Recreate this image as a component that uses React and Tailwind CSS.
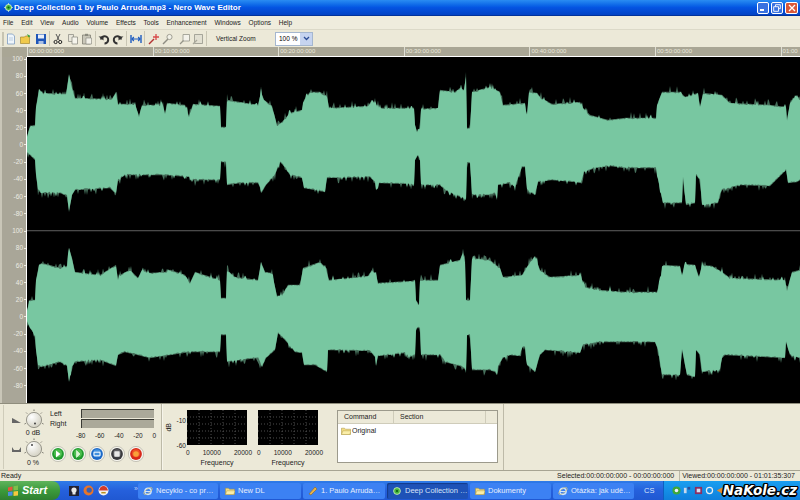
import React from 'react';

const rng = (seed) => () => {
  seed = (seed + 0x6d2b79f5) | 0;
  let t = Math.imul(seed ^ (seed >>> 15), 1 | seed);
  t = (t + Math.imul(t ^ (t >>> 7), 61 | t)) ^ t;
  return ((t ^ (t >>> 14)) >>> 0) / 4294967296;
};

const sampleEnv = (env, x) => {
  for (let i = 0; i < env.length - 1; i++) {
    const [x0, y0] = env[i];
    const [x1, y1] = env[i + 1];
    if (x >= x0 && x <= x1) return x1 === x0 ? y1 : y0 + ((y1 - y0) * (x - x0)) / (x1 - x0);
  }
  return env[env.length - 1][1];
};

const top1 = [[27,137],[30,126],[35,125],[36,107],[39,89],[42,93],[66,94],[69,74],[72,88],[75,98],[112,99],[116,92],[118,104],[135,104],[139,116],[142,105],[163,105],[165,114],[167,103],[185,105],[189,116],[193,104],[220,106],[221,127],[226,127],[227,100],[258,105],[261,92],[264,100],[272,106],[277,125],[282,122],[290,113],[302,110],[304,100],[310,92],[320,92],[327,96],[329,108],[368,106],[372,100],[376,105],[380,108],[414,108],[415,125],[417,132],[420,128],[421,109],[438,108],[440,90],[455,92],[460,88],[464,90],[466,76],[467,128],[470,128],[472,92],[490,87],[500,92],[503,105],[525,103],[527,118],[529,92],[537,93],[541,98],[552,104],[580,102],[583,108],[590,115],[608,120],[625,118],[656,118],[657,105],[662,92],[680,92],[685,97],[698,93],[700,107],[703,93],[722,95],[730,103],[770,105],[786,107],[787,120],[790,103],[797,95],[800,100]];
const bot1 = [[27,153],[30,155],[35,160],[36,175],[38,190],[41,193],[60,193],[67,196],[69,212],[72,195],[75,190],[110,188],[116,194],[118,180],[125,175],[165,175],[190,177],[192,182],[193,180],[220,180],[221,162],[226,162],[227,185],[240,183],[258,183],[262,192],[266,185],[275,175],[280,162],[283,165],[290,175],[302,178],[304,188],[315,190],[325,192],[327,178],[370,177],[375,182],[376,190],[378,188],[379,183],[410,184],[414,186],[415,160],[418,155],[420,160],[421,185],[440,185],[445,190],[458,196],[464,198],[466,200],[466,163],[470,163],[472,195],[490,195],[495,193],[497,200],[498,185],[510,183],[515,187],[522,167],[525,167],[527,190],[535,195],[538,182],[552,180],[575,182],[581,183],[584,172],[595,168],[610,166],[625,168],[656,168],[660,190],[663,203],[682,203],[683,178],[686,205],[695,203],[696,175],[700,180],[702,205],[718,203],[720,195],[722,190],[740,185],[770,186],[786,170],[788,183],[797,182],[800,180]];
const top2 = [[27,310],[30,300],[35,300],[36,280],[39,265],[42,263],[60,268],[67,266],[69,248],[72,258],[75,272],[100,275],[116,265],[118,280],[120,275],[130,270],[138,278],[142,270],[150,273],[165,272],[170,270],[185,275],[190,283],[195,272],[220,280],[221,298],[226,298],[227,270],[235,277],[258,280],[261,262],[265,272],[272,273],[277,296],[282,295],[288,285],[300,285],[303,268],[320,262],[326,268],[329,280],[350,278],[368,276],[372,270],[376,274],[378,283],[412,281],[415,280],[416,300],[419,305],[420,280],[438,280],[440,265],[460,260],[463,252],[465,262],[466,300],[470,300],[472,258],[490,260],[500,268],[503,277],[522,275],[530,262],[535,256],[540,270],[550,277],[580,275],[585,287],[600,290],[625,292],[657,292],[660,280],[663,265],[680,266],[682,275],[685,264],[695,265],[699,277],[702,265],[712,266],[722,272],[730,278],[785,280],[787,290],[792,272],[800,270]];
const bot2 = [[27,322],[30,328],[35,335],[36,350],[38,365],[41,367],[60,362],[67,366],[69,382],[72,367],[75,362],[100,360],[116,366],[118,355],[125,352],[150,358],[190,352],[220,352],[221,335],[226,335],[227,362],[240,360],[258,358],[262,367],[266,358],[275,350],[278,333],[285,340],[295,352],[302,353],[304,365],[315,365],[327,372],[328,350],[370,351],[375,357],[376,366],[378,356],[405,353],[410,357],[415,355],[416,328],[420,328],[421,355],[440,355],[445,362],[460,366],[466,370],[467,335],[470,335],[472,370],[490,370],[495,372],[497,375],[498,366],[503,358],[510,355],[520,356],[522,347],[525,347],[527,365],[535,372],[540,355],[545,350],[580,353],[583,345],[600,342],[655,342],[658,350],[662,375],[680,375],[682,350],[687,375],[695,377],[696,350],[700,355],[702,372],[720,370],[722,358],[725,355],[785,358],[786,342],[790,355],[800,358]];

// outward spikes are rare, the rest of the edge only wobbles a little
const edgeNoise = (r, fuzz) => {
  const a = r();
  const b = r();
  if (fuzz) return a < 0.14 ? 2 + b * 4 : 0.2;
  return a < 0.07 ? 1.5 + b * 2.5 : -b * 1.3;
};

const buildPoints = (top, bot, offset, seed, fuzz) => {
  const r = rng(seed);
  const upper = [];
  const lower = [];
  for (let x = 27; x <= 800; x += 1) {
    upper.push(`${x - 27},${(sampleEnv(top, x) - offset - edgeNoise(r, fuzz)).toFixed(1)}`);
    lower.unshift(`${x - 27},${(sampleEnv(bot, x) - offset + edgeNoise(r, fuzz)).toFixed(1)}`);
  }
  return [...upper, ...lower].join(' ');
};

const ch1 = { fuzz: buildPoints(top1, bot1, 57, 11, true), main: buildPoints(top1, bot1, 57, 23, false) };
const ch2 = { fuzz: buildPoints(top2, bot2, 230, 37, true), main: buildPoints(top2, bot2, 230, 41, false) };

const menus = ['File', 'Edit', 'View', 'Audio', 'Volume', 'Effects', 'Tools', 'Enhancement', 'Windows', 'Options', 'Help'];
const dbLabels = ['100', '80', '60', '40', '20', '0', '-20', '-40', '-60', '-80'];
const ruler = ['00:00:00:000', '00:10:00:000', '00:20:00:000', '00:30:00:000', '00:40:00:000', '00:50:00:000', '01:00'];

const Channel = ({ data, line }) => (
  <div className="flex h-[173px]">
    <div className="w-[26px] shrink-0 bg-[#a9a698] border-l-2 border-[#c9c6b8] text-[6.5px] text-[#ecebe2] relative">
      <div className={line ? 'mt-[-7.6px]' : 'mt-[-6.6px]'}>
        {dbLabels.map((l) => (
          <div key={l} className="h-[17.2px] flex items-center justify-end gap-[1px]">
            <span>{l}</span>
            <span className="w-[2px] h-px bg-[#ecebe2]" />
          </div>
        ))}
      </div>
    </div>
    <div className="w-px bg-white shrink-0" />
    <svg className="flex-1 h-[173px] bg-black block" viewBox="0 0 773 173" preserveAspectRatio="none">
      {line && <rect x="0" y="0" width="773" height="1.3" fill="#4a4a4a" />}
      <polygon points={data.fuzz} fill="#47705c" />
      <polygon points={data.main} fill="#78c7a1" />
    </svg>
  </div>
);

const Knob = ({ dotX, dotY }) => (
  <svg width="22" height="22" viewBox="0 0 22 22">
    <defs>
      <radialGradient id="knobFill" cx="0.35" cy="0.3" r="0.9">
        <stop offset="0" stopColor="#ffffff" />
        <stop offset="1" stopColor="#c9c6b4" />
      </radialGradient>
    </defs>
    <circle cx="11" cy="11" r="7.6" fill="url(#knobFill)" stroke="#77766c" strokeWidth="0.7" />
    <g stroke="#55544c" strokeWidth="0.8">
      <path d="M11 0.5v1.5M3.2 3.6l1 1M18.8 3.6l-1 1M1.5 15l1.3-.6M20.5 15l-1.3-.6" />
    </g>
    <circle cx={dotX} cy={dotY} r="0.9" fill="#333" />
  </svg>
);

const Transport = ({ outer, inner, children }) => (
  <svg width="16" height="16" viewBox="0 0 16 16">
    <circle cx="8" cy="8" r="7.6" fill="#f6f5ee" stroke="#a9a89c" strokeWidth="0.6" />
    <circle cx="8" cy="8" r="5.9" fill={outer} />
    <circle cx="8" cy="7.2" r="4" fill={inner} opacity="0.75" />
    {children}
  </svg>
);

const Graph = () => (
  <svg width="60" height="35" viewBox="0 0 60 35" className="block bg-black">
    <path d="M12 0v35M24 0v35M36 0v35M48 0v35M0 7h60M0 14h60M0 21h60M0 28h60" stroke="#6f6f6f" strokeWidth="0.7" strokeDasharray="1 2" />
  </svg>
);

const ToolIcon = ({ children, className = '' }) => (
  <svg width="12" height="12" viewBox="0 0 12 12" className={`shrink-0 ${className}`}>{children}</svg>
);

const Sep = () => <div className="w-px h-[15px] bg-[#c9c6b4] mx-[2px]" />;

const TaskBtn = ({ icon, label, active, width }) => (
  <div className={`${width} h-[16px] rounded-[2px] flex items-center gap-[3px] pl-[5px] text-[7.5px] whitespace-nowrap overflow-hidden ${active ? 'bg-[#1e52b7] text-[#d8e4f8] shadow-[inset_1px_1px_1px_#123a8a]' : 'bg-[#3c81f3] text-[#e6eefc]'}`}>
    {icon}
    <span>{label}</span>
  </div>
);

const IeIcon = () => (
  <svg width="10" height="10" viewBox="0 0 10 10">
    <circle cx="5" cy="5.3" r="3.2" fill="none" stroke="#cfe6ff" strokeWidth="1.3" />
    <path d="M2 5.5h6" stroke="#cfe6ff" strokeWidth="1" />
    <ellipse cx="5" cy="5" rx="5" ry="2" transform="rotate(-35 5 5)" fill="none" stroke="#f2d36a" strokeWidth="0.6" />
  </svg>
);

const FolderIcon = ({ size = 10 }) => (
  <svg width={size} height={size * 0.8} viewBox="0 0 10 8">
    <path d="M0.5 1.2h3l1 1h5v5.3h-9z" fill="#f3dc82" stroke="#a58f3c" strokeWidth="0.5" />
    <path d="M0.5 7.5l1.4-3.7h8.1l-1.2 3.7z" fill="#fbeea8" stroke="#a58f3c" strokeWidth="0.4" />
  </svg>
);

export default function App() {
  return (
    <div className="w-[800px] h-[500px] flex flex-col overflow-hidden relative bg-[#ece9d8] text-black [font-family:'Liberation_Sans',sans-serif]">
      {/* Title bar */}
      <div className="h-[16px] flex items-center pl-[4px] pr-[2px] bg-gradient-to-b from-[#2a8cf2] via-[#0554e2] to-[#0342c4] border-b border-[#02329a]">
        <svg width="9" height="9" viewBox="0 0 10 10" className="mr-[1px]">
          <circle cx="5" cy="5" r="3.4" fill="#46b53e" stroke="#d9f5c8" strokeWidth="1" />
          <circle cx="5" cy="5" r="1.2" fill="#0d5c12" />
          <path d="M5 0v2M5 8v2M0 5h2M8 5h2" stroke="#d9f5c8" strokeWidth="0.8" />
        </svg>
        <span className="text-[8px] tracking-[0.07px] font-bold text-white whitespace-nowrap">Deep Collection 1 by Paulo Arruda.mp3 - Nero Wave Editor</span>
        <div className="ml-auto flex gap-[2px]">
          <div className="w-[12px] h-[12px] rounded-[2px] bg-[#3a72e0] border border-white flex items-end pl-[2px] pb-[2px]">
            <div className="w-[4px] h-[2px] bg-white" />
          </div>
          <div className="w-[12px] h-[12px] rounded-[2px] bg-[#3a72e0] border border-white flex items-center justify-center">
            <svg width="8" height="8" viewBox="0 0 8 8"><path d="M2.5 2.5V.7h4.8v4H5.5M.7 2.7h4.8v4.6H.7z" fill="none" stroke="#fff" strokeWidth="0.9" /></svg>
          </div>
          <div className="w-[13px] h-[12px] rounded-[2px] bg-[#d9583a] border border-white flex items-center justify-center">
            <svg width="8" height="8" viewBox="0 0 8 8"><path d="M1 1l6 6M7 1L1 7" stroke="#fff" strokeWidth="1.3" /></svg>
          </div>
        </div>
      </div>

      {/* Menu bar */}
      <div className="h-[13px] flex items-center gap-[7.8px] pl-[3px] text-[6.5px] text-[#222] bg-[#efecdd]">
        {menus.map((m) => <span key={m}>{m}</span>)}
      </div>

      {/* Toolbar */}
      <div className="h-[18px] flex items-center pl-[2px] border-t border-[#dcd9c8] bg-[#ece9d8]">
        <div className="w-[2px] h-[14px] bg-[#c7c4b2] mr-[1px]" />
        <div className="flex items-center gap-[3px]">
          <ToolIcon><path d="M2.5 1h5l2 2v8h-7z" fill="#eef5fb" stroke="#7f9cc0" strokeWidth="0.8" /><path d="M4 5h4M4 7h4" stroke="#a8bdd6" strokeWidth="0.7" /></ToolIcon>
          <ToolIcon><path d="M0.5 4h4l1-1h4v7.5h-9z" fill="#f0c94a" stroke="#987b1d" strokeWidth="0.6" /><path d="M7 1l3.5 2-2 1.5z" fill="#3aa63a" /></ToolIcon>
          <ToolIcon><path d="M1 1h10v10H1z" fill="#1f56b8" /><path d="M3 1.5h6v4H3z" fill="#e8eef8" /><path d="M3.5 8h5v3h-5z" fill="#a9c0e6" /></ToolIcon>
        </div>
        <Sep />
        <div className="flex items-center gap-[2.5px]">
          <ToolIcon><path d="M4 1l3 6M8 1L5 7" stroke="#555" strokeWidth="1" /><circle cx="3.6" cy="9" r="1.6" fill="none" stroke="#222" strokeWidth="1" /><circle cx="8.2" cy="9" r="1.6" fill="none" stroke="#222" strokeWidth="1" /></ToolIcon>
          <ToolIcon><path d="M1.5 1.5h5v7h-5z" fill="#e8e6da" stroke="#85857c" strokeWidth="0.7" /><path d="M5 4h5.5v7H5z" fill="#f5f4ec" stroke="#85857c" strokeWidth="0.7" /></ToolIcon>
          <ToolIcon><path d="M1.5 2h8v9h-8z" fill="#c9c7b9" stroke="#77766a" strokeWidth="0.7" /><path d="M4 .8h3v2.2H4z" fill="#8b8a7e" /><path d="M5 5h5.5v6H5z" fill="#f2f1e9" stroke="#85857c" strokeWidth="0.6" /></ToolIcon>
        </div>
        <Sep />
        <div className="flex items-center gap-[2px]">
          <ToolIcon><path d="M3 6.5A3.6 3.6 0 1 1 6.5 10.5" fill="none" stroke="#333" strokeWidth="2" /><path d="M0.5 3.5h5v4z" fill="#333" /></ToolIcon>
          <ToolIcon><path d="M9 6.5A3.6 3.6 0 1 0 5.5 10.5" fill="none" stroke="#333" strokeWidth="2" /><path d="M11.5 3.5h-5v4z" fill="#333" /></ToolIcon>
        </div>
        <Sep />
        <ToolIcon className="ml-[1px]"><path d="M1 2v8M11 2v8" stroke="#1f5cc0" strokeWidth="1.4" /><path d="M2 6h8M3.8 4L2 6l1.8 2M8.2 4L10 6 8.2 8" fill="none" stroke="#1f5cc0" strokeWidth="1.2" /></ToolIcon>
        <Sep />
        <div className="flex items-center gap-[2px] ml-[1px]">
          <ToolIcon><path d="M1 11l5-5" stroke="#b33434" strokeWidth="1.5" /><path d="M8 1v6M5 4h6" stroke="#d84a4a" strokeWidth="1.3" /></ToolIcon>
          <ToolIcon><path d="M1 11l5-5" stroke="#8e8d82" strokeWidth="1.5" /><circle cx="7.5" cy="4" r="2.6" fill="#f2f1e7" stroke="#8e8d82" strokeWidth="0.8" /></ToolIcon>
          <ToolIcon className="ml-[3px]"><path d="M4 1.5h6.5v6.5H4z" fill="#f3f2ea" stroke="#96958a" strokeWidth="0.8" /><path d="M1 11l3.5-3.5" stroke="#96958a" strokeWidth="1.2" /></ToolIcon>
          <ToolIcon className="-ml-[1px]"><path d="M2.5 1.5h8v9h-8z" fill="#e2e0d2" stroke="#96958a" strokeWidth="0.8" /><path d="M1 11l4-4" stroke="#a9a89c" strokeWidth="1.2" /></ToolIcon>
        </div>
        <Sep />
        <span className="text-[6.5px] text-[#222] ml-[7px] w-[59px]">Vertical Zoom</span>
        <div className="w-[38px] h-[14px] bg-white border border-[#a5b7cf] flex items-center justify-between pl-[3px] text-[6.5px]">
          <span>100 %</span>
          <div className="w-[12px] h-full bg-[#c6d4f0] flex items-center justify-center">
            <svg width="7" height="5" viewBox="0 0 7 5"><path d="M1 1l2.5 2.5L6 1" fill="none" stroke="#2c4d96" strokeWidth="1.3" /></svg>
          </div>
        </div>
      </div>

      {/* Ruler */}
      <div className="h-[10px] flex bg-[#a9a695] text-[6px] text-[#e9e8dc]">
        <div className="w-[27px] shrink-0 border-l-2 border-[#c9c6b8]" />
        {ruler.map((t) => (
          <div key={t} className="w-[125.6px] shrink-0 border-l border-[#dfded2] pl-[1px] leading-[8px] whitespace-nowrap overflow-hidden">{t}</div>
        ))}
      </div>
      <div className="h-px bg-white ml-[27px] -mt-px relative" />

      {/* Waveform */}
      <Channel data={ch1} />
      <Channel data={ch2} line />

      {/* Bottom panel */}
      <div className="h-[67px] flex items-stretch text-[7px] text-[#222] border-t border-[#8f8d7d]">
        <div className="w-[158px] ml-[3px] my-[1px] border-l border-[#cfccba] flex">
          <div className="w-[37px] flex flex-col items-center pl-[10px] pt-[4px]">
            <div className="flex items-center">
              <svg width="11" height="7" viewBox="0 0 11 7" className="mr-[1px]"><path d="M1 1v5h9L3 2z" fill="#666" /></svg>
              <Knob dotX={12} dotY={14.5} />
            </div>
            <span className="leading-[7px] ml-[11px] -mt-[2px] whitespace-nowrap">0 dB</span>
            <div className="flex items-center mt-[2px]">
              <svg width="11" height="7" viewBox="0 0 11 7" className="mr-[1px]"><path d="M1 1v5h9V1L8 4H3z" fill="#666" /></svg>
              <Knob dotX={9} dotY={7} />
            </div>
            <span className="leading-[7px] ml-[11px] -mt-[1px] whitespace-nowrap">0 %</span>
          </div>
          <div className="flex-1 pl-[9px] pt-[4px]">
            <div className="flex">
              <div className="w-[31px] flex flex-col text-[7px] leading-[10px]">
                <span>Left</span>
                <span>Right</span>
              </div>
              <div className="w-[73px] flex flex-col gap-[1.5px]">
                <div className="h-[8.5px] bg-[#aba99a] border-t border-l border-[#3a3a34]" />
                <div className="h-[8.5px] bg-[#aba99a] border-t border-l border-[#3a3a34]" />
              </div>
            </div>
            <div className="w-[80px] ml-[26px] flex justify-between text-[6.5px] leading-[8px] mt-[3px]">
              <span>-80</span><span>-60</span><span>-40</span><span>-20</span><span>0</span>
            </div>
            <div className="flex gap-[3.5px] mt-[6px]">
              <Transport outer="#1f9a2e" inner="#5cc95a"><path d="M6 4.5l4.5 3.5L6 11.5z" fill="#fff" /></Transport>
              <Transport outer="#1f9a2e" inner="#5cc95a"><path d="M6.5 4.5l3.5 3.5-3.5 3.5z" fill="#d9f5d0" stroke="#fff" strokeWidth="0.5" /></Transport>
              <Transport outer="#1c69c8" inner="#4e9fe8"><path d="M5 6.2h6v3.6H5z" fill="none" stroke="#fff" strokeWidth="1" /></Transport>
              <Transport outer="#3a3a3e" inner="#6d6d72"><rect x="5.3" y="5.3" width="5.4" height="5.4" rx="0.6" fill="#e8e8e8" /></Transport>
              <Transport outer="#d8281a" inner="#f4602e"><circle cx="8" cy="8" r="2.8" fill="#f9a13a" /></Transport>
            </div>
          </div>
        </div>
        <div className="w-[2px] border-l border-[#bdbaa8] bg-[#f6f4ea]" />
        <div className="w-[174px] flex pt-[6px] pl-[2px]">
          <div className="w-[9px] h-[35px] flex items-center justify-center">
            <span className="-rotate-90 text-[7px]">dB</span>
          </div>
          <div className="w-[13px] h-[35px] flex flex-col items-end pr-[1px] text-[6.5px] pt-[7px] gap-[17px] leading-[8px]">
            <span>-10</span>
            <span>-60</span>
          </div>
          <div className="flex gap-[11px]">
            {[0, 1].map((i) => (
              <div key={i} className="w-[60px] flex flex-col">
                <Graph />
                <div className="flex justify-between text-[6.5px] leading-[8px] mt-[4px] -ml-[1px] -mr-[5px]">
                  <span>0</span><span>10000</span><span>20000</span>
                </div>
                <div className="text-center text-[7px] leading-[9px] mt-[1px]">Frequency</div>
              </div>
            ))}
          </div>
        </div>
        <div className="w-[161px] h-[53px] mt-[6px] bg-white border border-[#9c9a8c] flex flex-col">
          <div className="h-[13px] flex bg-[#ece9d8] border-b border-[#cfccba] leading-[12px]">
            <div className="w-[56px] pl-[6px] border-r border-[#cfccba]">Command</div>
            <div className="w-[92px] pl-[6px] border-r border-[#cfccba]">Section</div>
          </div>
          <div className="flex items-center gap-[1px] pl-[3px] pt-[2px]">
            <FolderIcon />
            <span>Original</span>
          </div>
        </div>
        <div className="w-[1px] ml-[5px] border-l border-[#bdbaa8]" />
      </div>

      {/* Status bar */}
      <div className="h-[11px] flex items-center text-[7px] text-[#222] border-t border-[#a7a493] bg-[#ece9d8] leading-[10px]">
        <span className="pl-[1px]">Ready</span>
        <span className="ml-auto whitespace-nowrap">Selected:00:00:00:000 - 00:00:00:000</span>
        <span className="ml-[5px] mr-[5px] pl-[2px] border-l border-[#bdbaa8] whitespace-nowrap">Viewed:00:00:00:000 - 01:01:35:307</span>
      </div>

      {/* Taskbar */}
      <div className="h-[19px] flex items-center bg-gradient-to-b from-[#2f7be8] via-[#2560dc] to-[#2058d2]">
        <div className="w-[60px] h-full rounded-r-[8px] bg-gradient-to-b from-[#5fb45c] via-[#3b9a3b] to-[#2f7f30] flex items-center pl-[7px] gap-[3px]">
          <svg width="12" height="12" viewBox="0 0 12 12">
            <path d="M1 2.5l4.5-1v4L1 6z" fill="#e8553a" />
            <path d="M6.5 1.3l4.5-.8v4.5l-4.5.5z" fill="#7cc04a" />
            <path d="M1 7l4.5-.5v4L1 11z" fill="#4a8fe0" />
            <path d="M6.5 6.4l4.5-.4v4.5l-4.5.6z" fill="#f3c93e" />
          </svg>
          <span className="text-[11px] italic font-bold text-white">Start</span>
        </div>
        <div className="flex items-center gap-[4px] ml-[9px] w-[69px]">
          <svg width="10" height="10" viewBox="0 0 10 10"><rect width="10" height="10" fill="#223" /><circle cx="5" cy="4" r="2.6" fill="#e8e8e8" /><rect x="3.5" y="6" width="3" height="2.5" fill="#e8e8e8" /></svg>
          <svg width="11" height="11" viewBox="0 0 10 10"><circle cx="5" cy="5" r="4.5" fill="#e8742a" /><circle cx="5.6" cy="4.6" r="2.4" fill="#3a5fb0" /></svg>
          <svg width="11" height="11" viewBox="0 0 10 10"><circle cx="5" cy="5" r="4.5" fill="#f2f2f2" /><path d="M1 5a4 4 0 0 1 8 0z" fill="#d23a2a" /><path d="M3 7h4" stroke="#b8901e" strokeWidth="1.4" /></svg>
          <span className="ml-auto text-[7px] text-[#bcd4f8] leading-[7px] mb-[4px]">»</span>
        </div>
        <div className="flex gap-[2px]">
          <TaskBtn width="w-[80px]" icon={<IeIcon />} label="Necyklo - co pr…" />
          <TaskBtn width="w-[81px]" icon={<FolderIcon />} label="New DL" />
          <TaskBtn width="w-[82px]" icon={<svg width="10" height="10" viewBox="0 0 10 10"><path d="M1 8l6-7 2 2-6 6z" fill="#e5b24a" stroke="#7d5a1a" strokeWidth="0.5" /></svg>} label="1. Paulo Arruda…" />
          <TaskBtn width="w-[81px]" active icon={<svg width="10" height="10" viewBox="0 0 10 10"><circle cx="5" cy="5" r="3.4" fill="#46b53e" stroke="#d9f5c8" strokeWidth="0.8" /><circle cx="5" cy="5" r="1.1" fill="#0d5c12" /></svg>} label="Deep Collection …" />
          <TaskBtn width="w-[81px]" icon={<FolderIcon />} label="Dokumenty" />
          <TaskBtn width="w-[81px]" icon={<IeIcon />} label="Otázka: jak udě…" />
        </div>
        <span className="ml-[10px] text-[7.5px] text-[#dbe7fb]">CS</span>
        <div className="ml-auto w-[137px] h-full bg-gradient-to-b from-[#1a9ef0] to-[#0f7fdc] border-l border-[#0d5fc0] flex items-center pl-[8px] gap-[2px]">
          <svg width="9" height="9" viewBox="0 0 10 10"><circle cx="5" cy="5" r="4.5" fill="#3fa83a" /><circle cx="5" cy="5" r="2" fill="#eef" /></svg>
          <svg width="9" height="9" viewBox="0 0 10 10"><rect x="1" y="2" width="3" height="6" fill="#c9d7ec" /><rect x="5" y="1" width="3" height="3" fill="#2b4f9b" /></svg>
          <svg width="9" height="9" viewBox="0 0 10 10"><rect x="1" y="1" width="8" height="8" fill="#8a2f62" /><rect x="3" y="3" width="4" height="4" fill="#d6dff0" /></svg>
          <svg width="9" height="9" viewBox="0 0 10 10"><circle cx="5" cy="5" r="3.4" fill="none" stroke="#e8edf4" strokeWidth="1.4" /></svg>
          <svg width="8" height="9" viewBox="0 0 10 10"><path d="M8 1L1 5l7 4z" fill="#e58a2a" /></svg>
        </div>
      </div>

      {/* Watermark over the taskbar */}
      <div className="absolute right-[3px] bottom-[1px] text-[13.5px] leading-[18px] font-bold italic text-white [font-family:'DejaVu_Sans',sans-serif] [text-shadow:-1.5px_0_#000,1.5px_0_#000,0_-1.5px_#000,0_1.5px_#000,-1px_-1px_#000,1px_1px_#000,-1px_1px_#000,1px_-1px_#000]">NaKole.cz</div>
    </div>
  );
}
